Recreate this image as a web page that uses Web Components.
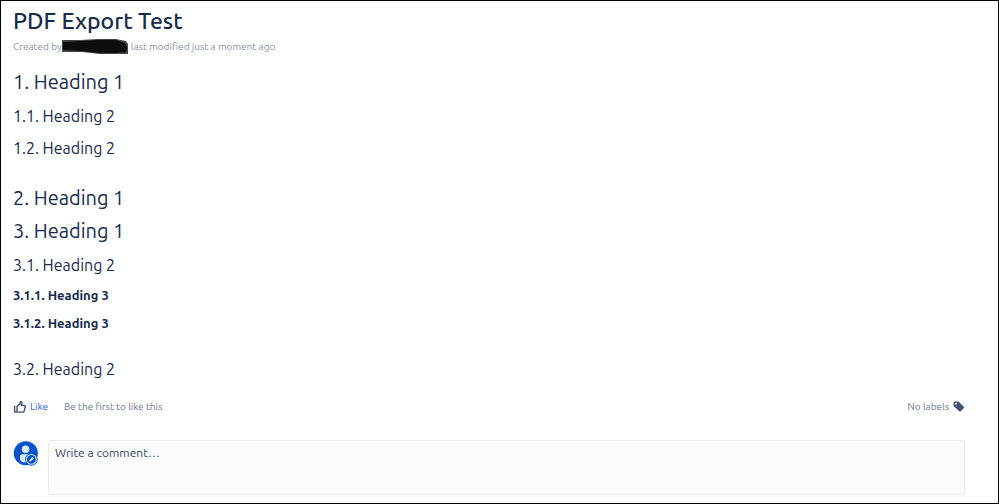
<!DOCTYPE html>
<html lang="en">
<head>
<meta charset="utf-8">
<title>PDF Export Test</title>
<style>
  html {
    box-sizing: border-box;
    min-height: 100%;
    border: 1px solid #000;
    background: #fff;
  }
  body {
    margin: 0;
    font-family: Ubuntu, "Noto Sans", sans-serif;
    color: #172b4d;
  }
</style>
</head>
<body>
<wiki-page></wiki-page>

<template id="wiki-page">
  <style>
  :host {
    display: block;
    padding: 6px 33px 8px 12px;
  }
  article {
    display: flex;
    flex-direction: column;
  }
  page-content {
    margin-top: 13px;
  }
  page-social {
    margin-top: 18px;
  }
  comment-box {
    margin-top: 25px;
  }
  </style>
  <article>
    <page-header>
      <span slot="title">PDF Export Test</span>
      <span slot="modified">last modified just a moment ago</span>
    </page-header>
    <page-content>
      <numbered-heading level="1" number="1.">Heading 1</numbered-heading>
      <numbered-heading level="2" number="1.1.">Heading 2</numbered-heading>
      <numbered-heading level="2" number="1.2.">Heading 2</numbered-heading>
      <numbered-heading level="1" number="2." spaced>Heading 1</numbered-heading>
      <numbered-heading level="1" number="3.">Heading 1</numbered-heading>
      <numbered-heading level="2" number="3.1.">Heading 2</numbered-heading>
      <numbered-heading level="3" number="3.1.1.">Heading 3</numbered-heading>
      <numbered-heading level="3" number="3.1.2.">Heading 3</numbered-heading>
      <numbered-heading level="2" number="3.2." spaced>Heading 2</numbered-heading>
    </page-content>
    <page-social></page-social>
    <comment-box></comment-box>
  </article>
</template>

<template id="page-header">
  <style>
  :host {
    display: block;
  }
  h1 {
    margin: 0;
    font-size: 23px;
    font-weight: 500;
    line-height: 28px;
  }
  .meta {
    display: flex;
    align-items: center;
    margin: 4px 0 0;
    color: #8993a4;
    font-size: 10px;
    line-height: 16px;
  }
  svg {
    display: block;
    margin-right: 2px;
  }
  </style>
  <h1><slot name="title"></slot></h1>
  <p class="meta">
    <span>Created by</span>
    <!-- hidden author -->
    <svg width="67" height="16" viewBox="0 0 67 16" aria-hidden="true">
      <defs>
        <filter id="soft" x="-5%" y="-20%" width="110%" height="140%"><feGaussianBlur stdDeviation=".7"/></filter>
      </defs>
      <g filter="url(#soft)">
        <path d="M0 1 L18 1 L36 0 L54 0 L64 2 L66 5 L66 15 L52 15 L38 15 L20 13 L0 13 Z" fill="#444"/>
        <path d="M1 3 L20 2 L36 1 L54 1 L63 4 L65 9 L64 13 L54 14 L38 14 L20 12 L1 11 Z" fill="#0a0a0a"/>
      </g>
    </svg>
    <slot name="modified"></slot>
  </p>
</template>

<template id="page-content">
  <style>
  :host {
    display: flex;
    flex-direction: column;
  }
  </style>
  <slot></slot>
</template>

<template id="numbered-heading">
  <style>
  :host {
    display: block;
    margin-top: 8px;
  }
  :host([level="1"]) {
    margin-top: 5px;
  }
  :host([spaced]) {
    margin-top: 24px;
  }
  :host(:first-child) {
    margin-top: 0;
  }
  h1, h2, h3 {
    margin: 0;
    font-weight: 400;
  }
  h1 {
    font-size: 20px;
    line-height: 28px;
  }
  h2 {
    font-size: 16px;
    line-height: 24px;
  }
  h3 {
    font-size: 13px;
    font-weight: 700;
    line-height: 20px;
  }
  </style>
</template>

<template id="page-social">
  <style>
  :host {
    display: flex;
    align-items: center;
    color: #6b778c;
    font-size: 10px;
    line-height: 16px;
  }
  button {
    display: flex;
    align-items: center;
    gap: 4px;
    margin: 0 16px 0 0;
    padding: 0;
    border: 0;
    background: none;
    color: #1f66d6;
    font: inherit;
    cursor: pointer;
  }
  svg {
    display: block;
  }
  .labels {
    display: flex;
    align-items: center;
    gap: 4px;
    margin-left: auto;
  }
  </style>
  <button type="button">
    <svg width="13" height="13" viewBox="0 0 13 13" fill="none" stroke="#42526e" stroke-width="1.4" stroke-linejoin="round" stroke-linecap="round" aria-hidden="true">
      <path d="M1.6 5.2 V11 H3.4"/>
      <path d="M4 10.2 V5.6 L6.8 3 L7.2 1.1 C7.4 .5 8.9 .6 9 1.8 C9.1 2.8 8.5 3.6 8.2 4.4 H11 C12 4.4 12.4 5 12.2 5.8 L11.2 10.1 C11 10.8 10.6 11.1 9.9 11.1 H5.4 C4.6 11.1 4 10.8 4 10.2 Z"/>
    </svg>
    <span>Like</span>
  </button>
  <span>Be the first to like this</span>
  <span class="labels">
    <span>No labels</span>
    <svg width="12" height="12" viewBox="0 0 12 12" aria-hidden="true">
      <path fill="#42526e" fill-rule="evenodd" d="M1.4 .4 H5.4 L10.6 5.6 Q11.4 6.4 10.6 7.2 L7.8 10.2 Q7 11 6.2 10.2 L.6 5 V1.2 Q.6 .4 1.4 .4 Z M3 1.8 A1 1 0 1 0 3 3.8 A1 1 0 1 0 3 1.8 Z"/>
    </svg>
  </span>
</template>

<template id="comment-box">
  <style>
  :host {
    display: flex;
    gap: 10px;
  }
  svg {
    display: block;
    flex: none;
    margin-top: 1px;
  }
  textarea {
    flex: 1;
    box-sizing: border-box;
    min-width: 0;
    height: 55px;
    padding: 3px 6px;
    border: 1px solid #ebecf0;
    border-radius: 3px;
    background: #fafbfc;
    color: #172b4d;
    font-family: inherit;
    font-size: 12px;
    line-height: 18px;
    resize: none;
  }
  textarea::placeholder {
    color: #344563;
    opacity: 1;
  }
  </style>
  <svg width="25" height="25" viewBox="0 0 25 25" aria-hidden="true">
    <circle cx="12.8" cy="12.2" r="12" fill="#0052cc"/>
    <circle cx="12.6" cy="8.2" r="3.8" fill="#deebff"/>
    <path d="M7 15 Q7 13.2 8.8 13.2 H16.4 Q18.2 13.2 18.2 15 V18 Q18.2 21.4 12.6 21.4 Q7 21.4 7 18 Z" fill="#deebff"/>
    <circle cx="18.4" cy="18.4" r="6.3" fill="#0052cc"/>
    <circle cx="18.4" cy="18.4" r="5.4" fill="#deebff"/>
    <circle cx="18.4" cy="18.4" r="4.4" fill="#0052cc"/>
    <path d="M16.6 20.2 L16.9 18.8 L19.5 16.2 L20.6 17.3 L18 19.9 Z" fill="#deebff" stroke="#deebff" stroke-width=".5"/>
  </svg>
  <textarea aria-label="Comment" placeholder="Write a comment…"></textarea>
</template>

<script>
class TemplateElement extends HTMLElement {
  constructor() {
    super()
    const template = document.getElementById(this.localName)
    const root = this.attachShadow({ mode: 'open' })
    root.appendChild(template.content.cloneNode(true))
  }
}

customElements.define('page-header', class PageHeader extends TemplateElement {})
customElements.define('page-content', class PageContent extends TemplateElement {})

customElements.define('numbered-heading', class NumberedHeading extends TemplateElement {

  get level() {
    return this.getAttribute('level') || '1'
  }

  get number() {
    return this.getAttribute('number') || ''
  }

  connectedCallback() {
    if (this.shadowRoot.querySelector('slot')) {
      return
    }
    const heading = document.createElement('h' + this.level)
    heading.append(this.number + ' ', document.createElement('slot'))
    this.shadowRoot.appendChild(heading)
  }
})

customElements.define('page-social', class PageSocial extends TemplateElement {})
customElements.define('comment-box', class CommentBox extends TemplateElement {})
customElements.define('wiki-page', class WikiPage extends TemplateElement {})
</script>
</body>
</html>
